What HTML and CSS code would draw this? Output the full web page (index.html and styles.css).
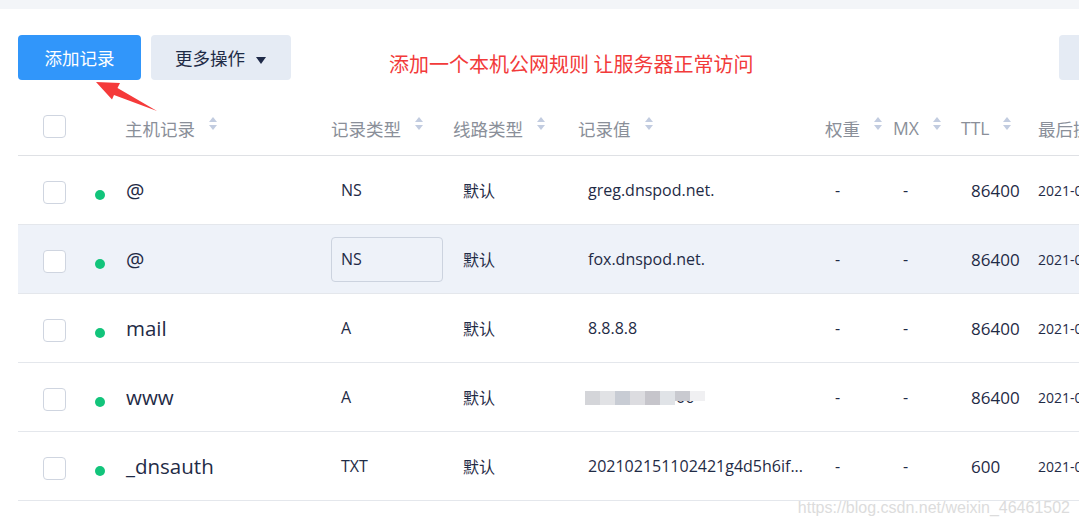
FILE: index.html
```
<!DOCTYPE html>
<html>
<head>
    <meta charset="utf-8">
    <title>记录管理</title>
    <link rel="stylesheet" href="styles.css">
</head>
<body>
    <div class="topbar"></div>

    <div class="toolbar">
        <button class="btn btn-primary">添加记录</button>
        <button class="btn btn-default">更多操作 <span class="caret"></span></button>
        <span class="note">添加一个本机公网规则 让服务器正常访问</span>
        <button class="btn btn-default btn-right">&nbsp;</button>
    </div>

    <!-- red arrow pointing at the add button -->
    <svg class="arrow" width="170" height="120" viewBox="0 0 170 120">
        <polygon points="96,82 120,83 117.5,88 157,111 114,95 112,99.5" fill="#f53a3a"/>
    </svg>

    <div class="table">
        <div class="row head">
            <div class="cell"><span class="check"></span></div>
            <div class="cell"></div>
            <div class="cell">主机记录<svg class="sort" width="8" height="14" viewBox="0 0 8 14"><polygon points="0,5 4,0 8,5"/><polygon points="0,8 8,8 4,13"/></svg></div>
            <div class="cell">记录类型<svg class="sort" width="8" height="14" viewBox="0 0 8 14"><polygon points="0,5 4,0 8,5"/><polygon points="0,8 8,8 4,13"/></svg></div>
            <div class="cell">线路类型<svg class="sort" width="8" height="14" viewBox="0 0 8 14"><polygon points="0,5 4,0 8,5"/><polygon points="0,8 8,8 4,13"/></svg></div>
            <div class="cell">记录值<svg class="sort" width="8" height="14" viewBox="0 0 8 14"><polygon points="0,5 4,0 8,5"/><polygon points="0,8 8,8 4,13"/></svg></div>
            <div class="cell">权重<svg class="sort" width="8" height="14" viewBox="0 0 8 14"><polygon points="0,5 4,0 8,5"/><polygon points="0,8 8,8 4,13"/></svg></div>
            <div class="cell">MX<svg class="sort" width="8" height="14" viewBox="0 0 8 14"><polygon points="0,5 4,0 8,5"/><polygon points="0,8 8,8 4,13"/></svg></div>
            <div class="cell">TTL<svg class="sort" width="8" height="14" viewBox="0 0 8 14"><polygon points="0,5 4,0 8,5"/><polygon points="0,8 8,8 4,13"/></svg></div>
            <div class="cell">最后操作时间</div>
        </div>

        <div class="row">
            <div class="cell"><span class="check"></span></div>
            <div class="cell"><span class="dot"></span></div>
            <div class="cell host">@</div>
            <div class="cell"><span class="val">NS</span></div>
            <div class="cell"><span class="val">默认</span></div>
            <div class="cell"><span class="val">greg.dnspod.net.</span></div>
            <div class="cell"><span class="val">-</span></div>
            <div class="cell"><span class="val">-</span></div>
            <div class="cell ttl"><span class="val">86400</span></div>
            <div class="cell time">2021-02-15 11:02:42</div>
        </div>

        <div class="row active">
            <div class="cell"><span class="check"></span></div>
            <div class="cell"><span class="dot"></span></div>
            <div class="cell host">@</div>
            <div class="cell"><span class="val boxed">NS</span></div>
            <div class="cell"><span class="val">默认</span></div>
            <div class="cell"><span class="val">fox.dnspod.net.</span></div>
            <div class="cell"><span class="val">-</span></div>
            <div class="cell"><span class="val">-</span></div>
            <div class="cell ttl"><span class="val">86400</span></div>
            <div class="cell time">2021-02-15 11:02:42</div>
        </div>

        <div class="row">
            <div class="cell"><span class="check"></span></div>
            <div class="cell"><span class="dot"></span></div>
            <div class="cell host">mail</div>
            <div class="cell"><span class="val">A</span></div>
            <div class="cell"><span class="val">默认</span></div>
            <div class="cell"><span class="val">8.8.8.8</span></div>
            <div class="cell"><span class="val">-</span></div>
            <div class="cell"><span class="val">-</span></div>
            <div class="cell ttl"><span class="val">86400</span></div>
            <div class="cell time">2021-02-15 11:02:42</div>
        </div>

        <div class="row">
            <div class="cell"><span class="check"></span></div>
            <div class="cell"><span class="dot"></span></div>
            <div class="cell host">www</div>
            <div class="cell"><span class="val">A</span></div>
            <div class="cell"><span class="val">默认</span></div>
            <div class="cell">
                <span class="val masked">
                    <span class="tail">06</span>
                    <span class="mosaic">
                        <i style="background:#d4d5d9"></i><i style="background:#e1e2e5"></i><i style="background:#c8ccd4"></i><i style="background:#dcdce0"></i><i style="background:#c6c5cb"></i><i style="background:#e0e3e7"></i><i class="short" style="background:#c9cad0"></i><i class="short" style="background:#f0f0f2"></i>
                    </span>
                </span>
            </div>
            <div class="cell"><span class="val">-</span></div>
            <div class="cell"><span class="val">-</span></div>
            <div class="cell ttl"><span class="val">86400</span></div>
            <div class="cell time">2021-02-15 11:02:42</div>
        </div>

        <div class="row">
            <div class="cell"><span class="check"></span></div>
            <div class="cell"><span class="dot"></span></div>
            <div class="cell host">_dnsauth</div>
            <div class="cell"><span class="val">TXT</span></div>
            <div class="cell"><span class="val">默认</span></div>
            <div class="cell"><span class="val">202102151102421g4d5h6if...</span></div>
            <div class="cell"><span class="val">-</span></div>
            <div class="cell"><span class="val">-</span></div>
            <div class="cell ttl"><span class="val">600</span></div>
            <div class="cell time">2021-02-15 11:02:42</div>
        </div>
    </div>

    <div class="watermark">https://blog.csdn.net/weixin_46461502</div>
</body>
</html>
```

FILE: styles.css
```
html, body {
    margin: 0;
    padding: 0;
}
body {
    position: relative;
    width: 1079px;
    height: 526px;
    overflow: hidden;
    background: #fff;
    font-family: "Open Sans", "Noto Sans CJK SC", sans-serif;
    color: #1f2b46;
}
.topbar {
    height: 9px;
    background: #f3f5f8;
}
.toolbar {
    display: flex;
    align-items: flex-start;
    gap: 10px;
    margin: 26px -80px 25px 18px;
}
.btn {
    height: 45px;
    border: none;
    border-radius: 4px;
    font-family: inherit;
    font-size: 17.5px;
    padding: 0 25px;
    cursor: pointer;
}
.btn-primary {
    width: 123px;
    background: #3196fa;
    color: #fff;
}
.btn-default {
    width: 140px;
    background: #e5ebf4;
    color: #1f2b46;
    padding: 0 24px;
    text-align: left;
}
.btn-right {
    width: 100px;
    margin-left: auto;
}
.caret {
    display: inline-block;
    margin-left: 6px;
    vertical-align: middle;
    border-left: 5px solid transparent;
    border-right: 5px solid transparent;
    border-top: 7px solid #1f2a48;
}
.note {
    margin: 18px 0 0 88px;
    font-size: 20px;
    line-height: 22px;
    color: #f23a3a;
    font-family: "Noto Sans CJK SC", sans-serif;
}
.arrow {
    position: absolute;
    left: 0;
    top: 0;
}

.table {
    margin-left: 18px;
}
.row {
    display: grid;
    grid-template-columns: 67px 30px 206px 122px 125px 247px 68px 68px 77px 200px;
    height: 69px;
    box-sizing: border-box;
    border-bottom: 1px solid #e4e7ec;
    align-items: center;
    white-space: nowrap;
}
.row.head {
    height: 51px;
    padding-bottom: 4px;
    border-bottom-color: #dfe1e5;
    color: #8a8f99;
}
.row.active {
    background: #eef2f9;
}
.cell {
    padding-left: 10px;
    font-size: 16px;
    display: flex;
    align-items: center;
}
.head .cell {
    font-size: 17.5px;
}
.cell:first-child {
    padding-left: 25px;
}
.check {
    display: block;
    width: 21px;
    height: 21px;
    border: 1px solid #cfd5e0;
    border-radius: 4px;
    background: #fff;
    margin-top: 4px;
}
.head .check {
    margin-top: -3px;
}
.dot {
    display: block;
    width: 10px;
    height: 10px;
    border-radius: 50%;
    background: #12c47b;
    margin-top: 9px;
}
.host {
    font-size: 20.5px;
    padding-left: 11px;
}
.sort {
    margin: -8px 0 0 14px;
    fill: #c2cce0;
}
.val {
    display: flex;
    align-items: center;
    box-sizing: border-box;
    width: 100%;
    height: 45px;
    padding-left: 9px;
    border: 1px solid transparent;
    border-radius: 4px;
}
.val.boxed {
    border-color: #ccd3df;
}
.ttl .val {
    font-size: 17px;
}
.time {
    font-size: 14px;
}

/* blurred ip address */
.masked {
    position: relative;
}
.tail {
    padding-left: 88px;
    font-size: 16px;
}
.mosaic {
    position: absolute;
    left: 6px;
    top: 15px;
    display: flex;
    align-items: flex-start;
}
.mosaic i {
    display: block;
    width: 15px;
    height: 14px;
}
.mosaic i.short {
    height: 10px;
}

.watermark {
    position: absolute;
    right: 9px;
    top: 499px;
    font-family: "Liberation Sans", Arial, sans-serif;
    font-size: 16px;
    color: #dcdcdc;
}
```
